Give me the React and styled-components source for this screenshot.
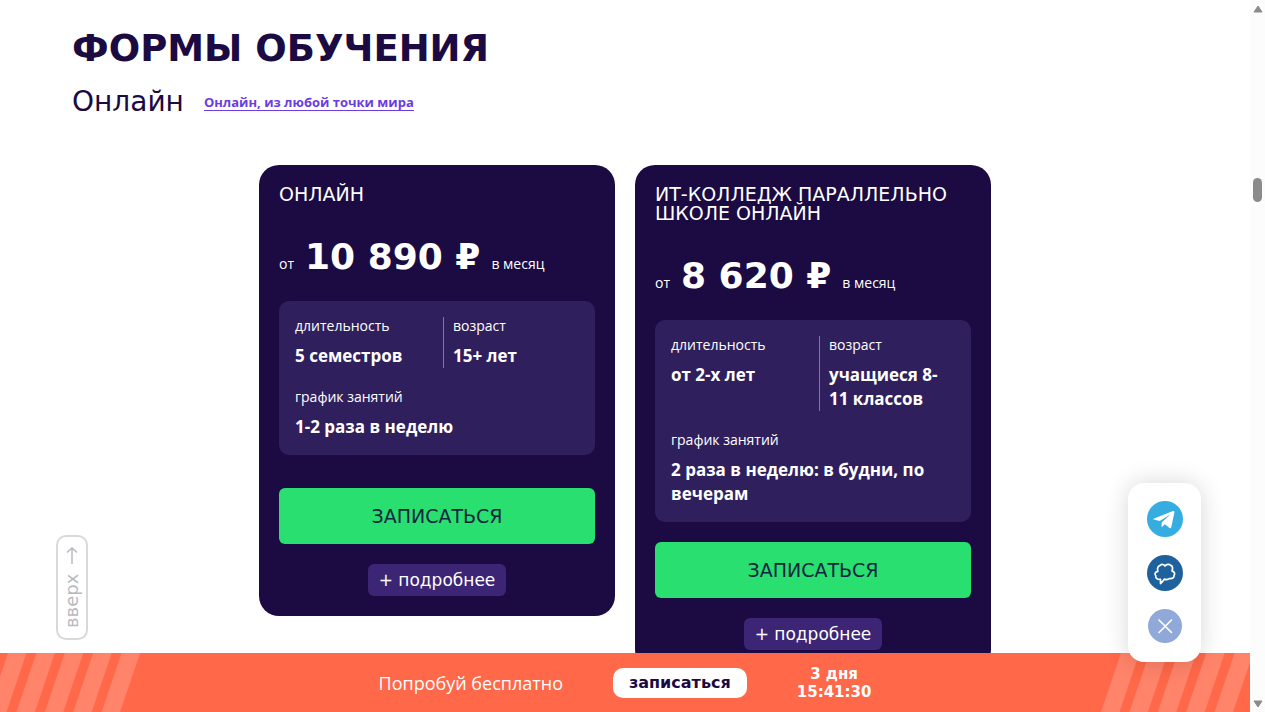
import React from "react";
import styled, { createGlobalStyle } from "styled-components";

const wide = `"DejaVu Sans", sans-serif`;
const body = `"Open Sans", "Noto Sans", sans-serif`;

const courses = [
  {
    title: "Онлайн",
    price: "10 890 ₽",
    duration: "5 семестров",
    age: "15+ лет",
    schedule: "1-2 раза в неделю",
  },
  {
    title: "ИТ-колледж параллельно школе онлайн",
    price: "8 620 ₽",
    duration: "от 2-х лет",
    age: "учащиеся 8-11 классов",
    schedule: "2 раза в неделю: в будни, по вечерам",
  },
];

function Course({ course }) {
  return (
    <Card>
      <CardTitle>{course.title}</CardTitle>
      <Price>
        <span>от</span>
        <strong>{course.price}</strong>
        <span>в месяц</span>
      </Price>
      <Details>
        <Columns>
          <Fact>
            <dt>длительность</dt>
            <dd>{course.duration}</dd>
          </Fact>
          <Fact $divided>
            <dt>возраст</dt>
            <dd>{course.age}</dd>
          </Fact>
        </Columns>
        <Fact>
          <dt>график занятий</dt>
          <dd>{course.schedule}</dd>
        </Fact>
      </Details>
      <SignUp type="button">Записаться</SignUp>
      <More type="button">+ подробнее</More>
    </Card>
  );
}

function Stripes({ start, side }) {
  return (
    <StripeArt $side={side} viewBox="0 0 150 59" aria-hidden="true">
      {[0, 1, 2, 3, 4].map((i) => {
        const x = start + i * 28.4;
        return (
          <path
            key={i}
            d={`M${x} 0h18.5l-20 59h-18.5z`}
            fill="#ff846a"
          />
        );
      })}
    </StripeArt>
  );
}

export default function App() {
  return (
    <>
      <GlobalStyle />
      <Screen>
        <Page>
          <Content>
            <Heading>Формы обучения</Heading>
            <SubRow>
              <SubHeading>Онлайн</SubHeading>
              <PlaceLink href="#online">Онлайн, из любой точки мира</PlaceLink>
            </SubRow>
            <Cards>
              {courses.map((course) => (
                <Course key={course.title} course={course} />
              ))}
            </Cards>
          </Content>

          <UpButton type="button">
            <span>вверх</span>
            <svg width="12" height="18" viewBox="0 0 12 18" aria-hidden="true">
              <path
                d="M6 1v16M1 12.500L6 17l5-4.500"
                fill="none"
                stroke="currentColor"
                strokeWidth="1.500"
              />
            </svg>
          </UpButton>

          <PromoBar>
            <Stripes start={8} side="left" />
            <PromoText>Попробуй бесплатно</PromoText>
            <PromoButton type="button">записаться</PromoButton>
            <Timer>
              <span>3 дня</span>
              <span>15:41:30</span>
            </Timer>
            <Stripes start={21} side="right" />
          </PromoBar>

          <Messengers>
            <RoundLink href="#telegram" aria-label="Telegram" $color="#35ade1">
              <svg width="36" height="36" viewBox="0 0 36 36">
                <path
                  d="M6.500 17.800L26 10c.9-.3 1.700.2 1.400 1.600l-3.100 14.500c-.2 1-.9 1.300-1.700.8l-4.800-3.600-2.300 2.300c-.3.3-.5.5-1 .5l.3-4.900 8.900-8-11 6.900-5.800-1.500c-.9-.3-.9-.6-.4-.8z"
                  fill="#fff"
                />
              </svg>
            </RoundLink>
            <RoundLink href="#chat" aria-label="Чат" $color="#1f619d">
              <svg width="36" height="36" viewBox="0 0 36 36">
                <path
                  d="M13.500 28.500V24.300C10.500 24.800 8.300 23.200 8.800 20.800C7.200 19 8.200 16.800 10.800 16.300C10 13.500 10.800 10.800 13.200 10.300C14.800 8.900 16.800 9.300 17.900 11C19.500 9.200 22.300 8.800 23.700 10.400C25.700 10.800 26 13.400 25 15.900C27.500 16.800 28.400 18.700 27 20.600C27.300 22.800 25.300 24 22.400 23.600C20.600 24.900 19 24.800 17.300 24.100C16.300 25.800 15 27.300 13.500 28.500z"
                  fill="none"
                  stroke="#fff"
                  strokeWidth="1.700"
                  strokeLinejoin="round"
                />
              </svg>
            </RoundLink>
            <CloseButton type="button" aria-label="Закрыть">
              <svg width="34" height="34" viewBox="0 0 34 34">
                <path
                  d="M11 11l12.500 12.500M23.500 11L11 23.500"
                  stroke="#fff"
                  strokeWidth="1.600"
                  strokeLinecap="round"
                />
              </svg>
            </CloseButton>
          </Messengers>
        </Page>

        <ScrollTrack aria-hidden="true">
          <svg width="10" height="8" viewBox="0 0 10 8">
            <path d="M5 1L9 7H1z" fill="#8b8b8b" stroke="#8b8b8b" strokeLinejoin="round" />
          </svg>
          <ScrollThumb />
          <svg width="10" height="8" viewBox="0 0 10 8">
            <path d="M5 7L1 1h8z" fill="#8b8b8b" stroke="#8b8b8b" strokeLinejoin="round" />
          </svg>
        </ScrollTrack>
      </Screen>
    </>
  );
}

const GlobalStyle = createGlobalStyle`
  * {
    box-sizing: border-box;
  }
  body {
    margin: 0;
    background: #fff;
    color: #1b0b42;
    font-family: ${body};
  }
  h1, h2, h3, dl, dd, p {
    margin: 0;
  }
  button {
    padding: 0;
    border: 0;
    cursor: pointer;
  }
`;

const Screen = styled.div`
  display: flex;
  height: 100vh;
  overflow: hidden;
`;

const Page = styled.div`
  position: relative;
  flex: 1;
  overflow: hidden;
`;

const Content = styled.main`
  padding: 27px 72px 0;
`;

const Heading = styled.h1`
  font: 700 37px/44px ${wide};
  text-transform: uppercase;
`;

const SubRow = styled.div`
  display: flex;
  align-items: center;
  gap: 20px;
  margin-top: 15px;
`;

const SubHeading = styled.h2`
  font: 400 28px/32px ${wide};
`;

const PlaceLink = styled.a`
  color: #6a3de0;
  font-size: 13px;
  font-weight: 700;
  line-height: 16px;
  text-decoration: none;
  border-bottom: 1px solid currentColor;
`;

const Cards = styled.div`
  display: flex;
  justify-content: center;
  align-items: flex-start;
  gap: 20px;
  margin-top: 47px;
`;

const Card = styled.article`
  display: flex;
  flex-direction: column;
  width: 356px;
  min-height: 451px;
  padding: 20px;
  border-radius: 20px;
  background: #1b0b42;
  color: #fff;
`;

const CardTitle = styled.h3`
  font: 400 19px/19px ${wide};
  text-transform: uppercase;
`;

const Price = styled.p`
  display: flex;
  align-items: baseline;
  gap: 11px;
  margin: 29px 0 20px;
  font-size: 14px;
  line-height: 20px;

  strong {
    font: 700 36px/48px ${wide};
  }
`;

const Details = styled.dl`
  display: flex;
  flex-direction: column;
  gap: 20px;
  margin-bottom: 20px;
  padding: 16px;
  border-radius: 10px;
  background: #301f5d;
`;

const Columns = styled.div`
  display: grid;
  grid-template-columns: 148px 1fr;
`;

const Fact = styled.div`
  padding-left: ${(p) => (p.$divided ? "9px" : "0")};
  border-left: ${(p) => (p.$divided ? "1px solid #83799d" : "0")};

  dt {
    margin-bottom: 10px;
    font-size: 14px;
    line-height: 17px;
  }
  dd {
    font-size: 17px;
    font-weight: 700;
    line-height: 24px;
  }
`;

const SignUp = styled.button`
  height: 56px;
  margin-top: auto;
  border-radius: 6px;
  background: #28df70;
  color: #12263f;
  font: 400 19px/20px ${wide};
  text-transform: uppercase;
`;

const More = styled.button`
  align-self: center;
  height: 32px;
  margin-top: 20px;
  padding: 0 11px;
  border-radius: 6px;
  background: #3c2574;
  color: #fff;
  font: 400 17px/20px ${wide};
`;

const UpButton = styled.button`
  position: absolute;
  left: 56px;
  bottom: 72px;
  display: flex;
  align-items: center;
  justify-content: center;
  gap: 8px;
  width: 32px;
  height: 105px;
  border: 2px solid #d9d9dd;
  border-radius: 10px;
  background: #fff;
  color: #b9b9c0;
  font: 400 18px/20px ${wide};
  writing-mode: vertical-rl;
  transform: rotate(180deg);
`;

const PromoBar = styled.aside`
  position: absolute;
  left: 0;
  right: 0;
  bottom: 0;
  display: flex;
  align-items: center;
  justify-content: center;
  gap: 50px;
  height: 59px;
  background: #ff6848;
  color: #fff;
`;

const StripeArt = styled.svg`
  position: absolute;
  top: 0;
  ${(p) => p.$side}: 0;
  width: 150px;
  height: 59px;
`;

const PromoText = styled.p`
  font-size: 18px;
  line-height: 24px;
`;

const PromoButton = styled.button`
  height: 30px;
  padding: 0 16px;
  border-radius: 10px;
  background: #fff;
  color: #1b0b42;
  font: 700 16px/20px ${wide};
`;

const Timer = styled.div`
  display: flex;
  flex-direction: column;
  align-items: center;
  font: 700 15px/18px ${wide};
`;

const Messengers = styled.div`
  position: absolute;
  right: 49px;
  bottom: 50px;
  display: flex;
  flex-direction: column;
  align-items: center;
  gap: 18px;
  width: 73px;
  padding: 18px 0 19px;
  border-radius: 16px;
  background: #fff;
  box-shadow: 0 0 24px rgba(0, 0, 0, 0.16);
`;

const RoundLink = styled.a`
  width: 36px;
  height: 36px;
  border-radius: 50%;
  background: ${(p) => p.$color};
`;

const CloseButton = styled.button`
  width: 34px;
  height: 34px;
  border-radius: 50%;
  background: #90a9d9;
`;

const ScrollTrack = styled.div`
  display: flex;
  flex-direction: column;
  align-items: center;
  width: 15px;
  padding: 5px 0 4px;
  background: #fcfcfc;

  svg:last-child {
    margin-top: auto;
  }
`;

const ScrollThumb = styled.div`
  width: 9px;
  height: 24px;
  margin-top: 165px;
  border-radius: 5px;
  background: #8b8b8b;
`;
